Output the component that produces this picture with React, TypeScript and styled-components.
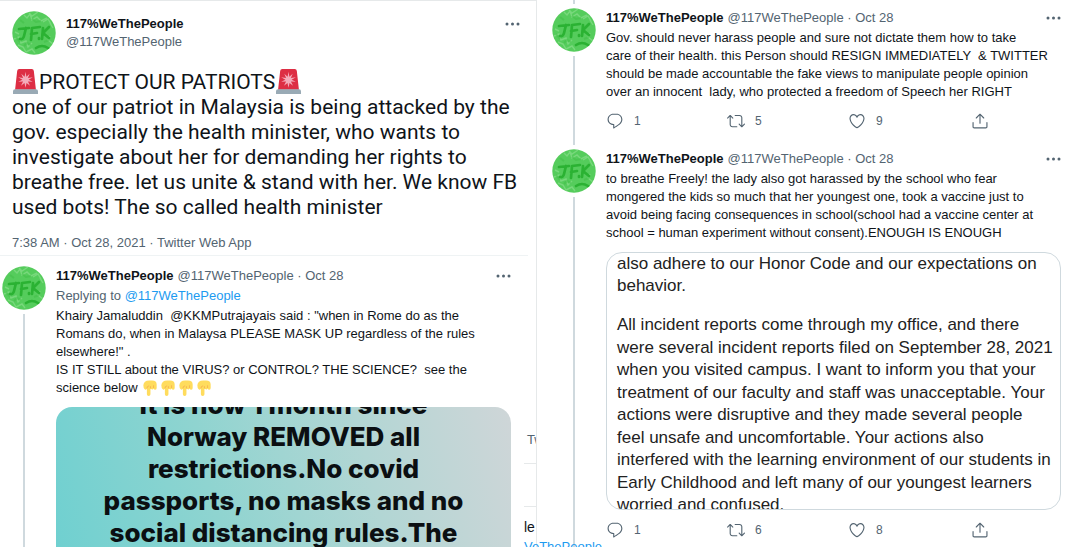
import React from "react";
import styled, { createGlobalStyle } from "styled-components";

const Global = createGlobalStyle`
  * { box-sizing: border-box; }
  body { margin: 0; background: #fff; color: #0f1419; font-family: "Liberation Sans", Arial, sans-serif; }
  p, h1, h2 { margin: 0; }
`;

const Page = styled.main`
  display: grid;
  grid-template-columns: 1fr 1fr;
  height: 100vh;
  overflow: hidden;
`;

const LeftColumn = styled.section`
  display: flex;
  flex-direction: column;
  min-width: 0;
  border-top: 1px solid #e6e9ea;
  border-right: 1px solid #e6e9ea;
`;

const RightColumn = styled.section`
  display: flex;
  flex-direction: column;
  min-width: 0;
  padding: 0 13px 0 15px;
`;

const Lead = styled.article`
  margin-right: 8px;
  padding: 10px 0 0 12px;
  border-bottom: 1px solid #eff3f4;
`;

const LeadHeader = styled.header`
  display: flex;
  gap: 10px;
  padding-right: 8px;
`;

const Names = styled.div`
  flex: 1;
  display: flex;
  flex-direction: column;
  padding-top: 4px;
  line-height: 18px;
`;

const Name = styled.span`
  font-size: 13px;
  font-weight: 700;
  color: #0f1419;
`;

const Muted = styled.span`
  font-size: 13px;
  color: #536471;
`;

const LeadText = styled.p`
  margin-top: 14px;
  font-family: Roboto, "Liberation Sans", sans-serif;
  font-size: 21px;
  line-height: 25px;
  white-space: pre;
`;

const Timestamp = styled.p`
  padding: 14px 0 3px;
  font-size: 13px;
  line-height: 18px;
  color: #536471;
`;

const AvatarSvg = styled.svg`
  display: block;
  flex: none;
  width: 44px;
  height: 44px;
`;

const Lower = styled.div`
  flex: 1;
  display: flex;
  min-height: 0;
`;

const Tweet = styled.article<{ $grow?: boolean }>`
  display: flex;
  gap: 10px;
  min-width: 0;
  ${(p) => p.$grow && "flex: 1;"}
`;

const Rail = styled.div<{ $top: number }>`
  display: flex;
  flex-direction: column;
  align-items: center;
  gap: 4px;
  &::before {
    content: "";
    width: 2px;
    height: ${(p) => p.$top}px;
    background: #cfd9de;
  }
  &::after {
    content: "";
    flex: 1;
    width: 2px;
    background: #cfd9de;
  }
`;

const Body = styled.div<{ $top: number }>`
  flex: 1;
  display: flex;
  flex-direction: column;
  min-width: 0;
  padding-top: ${(p) => p.$top}px;
`;

const TweetHeader = styled.header`
  display: flex;
  align-items: center;
  gap: 4px;
  height: 18px;
  line-height: 18px;
  white-space: nowrap;
`;

const TweetText = styled.p`
  margin-top: 2px;
  font-size: 13px;
  line-height: 18px;
  white-space: pre;
`;

const TextLink = styled.a`
  color: #1d9bf0;
  text-decoration: none;
`;

const MoreButton = styled.button`
  display: flex;
  margin: 0 0 0 auto;
  padding: 0;
  border: 0;
  background: none;
  color: #536471;
  height: 18px;
  align-items: center;
`;

const LeadMore = styled.div`
  padding-top: 4px;
`;

const Poster = styled.figure`
  flex: 1;
  margin: 10px 0 0;
  overflow: hidden;
  border-radius: 16px 16px 0 0;
  background: linear-gradient(75deg, #6fd0d0 0%, #8fd4d0 35%, #b2d6d4 68%, #cfd6d8 100%);
  text-align: center;
  font: 800 26px/32px Inter, sans-serif;
  color: #0b0f12;
`;

const PosterText = styled.p`
  margin-top: -18px;
  white-space: pre;
`;

const Letter = styled.figure`
  display: flex;
  flex-direction: column;
  height: 258px;
  margin: 10px 0 0;
  padding: 0 10px;
  overflow: hidden;
  border: 1px solid #cfd9de;
  border-radius: 16px;
  font: 17px/22px "Liberation Sans", Arial, sans-serif;
  color: #222;
`;

const Paragraph = styled.div<{ $height: number }>`
  flex: none;
  display: flex;
  flex-direction: column;
  justify-content: space-between;
  height: ${(p) => p.$height}px;
  margin-bottom: 17px;
  white-space: pre;
`;

const Actions = styled.footer`
  display: grid;
  grid-template-columns: 121px 121px 123px 1fr;
  margin-top: 10px;
  padding-bottom: 10px;
`;

const Action = styled.button`
  display: flex;
  align-items: center;
  gap: 10px;
  padding: 0;
  border: 0;
  background: none;
  height: 20px;
  font: 12px/20px "Liberation Sans", Arial, sans-serif;
  color: #536471;
`;

const Strip = styled.aside`
  position: relative;
  z-index: 1;
  flex: none;
  width: 12px;
  margin-left: 13px;
  padding-top: 175px;
  font-size: 13px;
  line-height: 18px;
  white-space: nowrap;
`;

const Clip = styled.div<{ $h: number; $line?: boolean }>`
  height: ${(p) => p.$h}px;
  overflow: hidden;
  padding-left: 3px;
  color: #536471;
  ${(p) => p.$line && "border-bottom: 1px solid #e6e9ea;"}
`;

const ClipName = styled.div`
  overflow: hidden;
  height: 31px;
  padding-top: 10px;
  color: #0f1419;
  font-size: 14px;
  line-height: 20px;
`;

function Avatar() {
  return (
    <AvatarSvg viewBox="0 0 44 44" role="img" aria-label="117%WeThePeople">
      <defs>
        <clipPath id="disc"><circle cx="22" cy="22" r="21.7" /></clipPath>
      </defs>
      <g clipPath="url(#disc)">
        <rect width="44" height="44" fill="#56cc5c" />
        <g fill="none" stroke="#8fe091" strokeWidth="1.4" opacity=".6">
          <path d="M12 4l3 3 3-4 2 6 5-3 4 4 6-3M31 11l5-3 3 5M17 2l3 3 6-4M38 12l3 5" />
          <path d="M2 28l5-2 2 6 5-2 2 6 4-4M6 34l5 2 3 5 6-3 3 4M38 25l-2 4 5 4M3 21l4 2" />
        </g>
        <g fill="none" stroke="#40bd46" strokeWidth="2" opacity=".5">
          <path d="M20 8l4 3 5-1M12 35l3-3 4 2M32 31l5-2M4 26l4 5M8 9l4 3" />
        </g>
        <g fill="none" stroke="#2bb233" strokeWidth="2.7" strokeLinecap="round" strokeLinejoin="round">
          <path d="M7 18l10-1M14 17l-2 8q-1 4-4 3M20 17l8-1M20 17l-1 12M19 23l6-1M31 17l-1 11M37 16l-6 6 6 5M27 27v1" />
          <path d="M24 37q6-4 12 0l2 2" />
        </g>
      </g>
    </AvatarSvg>
  );
}

function More() {
  return (
    <MoreButton aria-label="More">
      <svg width="15" height="4" viewBox="0 0 15 4" fill="currentColor">
        <circle cx="2" cy="2" r="1.5" /><circle cx="7.5" cy="2" r="1.5" /><circle cx="13" cy="2" r="1.5" />
      </svg>
    </MoreButton>
  );
}

const EmojiSvg = styled.svg<{ $size: number }>`
  width: ${(p) => p.$size}px;
  height: ${(p) => p.$size}px;
`;
const SirenSvg = styled(EmojiSvg)`
  margin: 0 1px;
  vertical-align: -5px;
`;
const HandSvg = styled(EmojiSvg)`
  margin: 0 1px;
  vertical-align: -4px;
`;

function Siren() {
  return (
    <SirenSvg $size={25} viewBox="0 0 36 36" aria-label="siren">
      <path d="M3 30L6 3q.3-3 3-3h18q2.700 0 3 3l3 27z" fill="#dd2e44" />
      <path d="M18 4l1.300 7 4.700-4-2.500 6 7-1-6 3.500 6 3-7-.500 3 6-5-4-1.500 7-1.500-7-5 4 3-6-7 .500 6-3-6-3.500 7 1-2.500-6 4.700 4z" fill="#f4abba" />
      <path d="M0 32q0-3 3-3h30q3 0 3 3v4H0z" fill="#99aab5" />
    </SirenSvg>
  );
}

function Hand() {
  return (
    <HandSvg $size={16} viewBox="0 0 36 36" aria-label="pointing down">
      <path d="M3 12Q4 1 16 1h7q10 0 10 9v8q0 4-3 4t-4-3q-1 3-4 2t-3-2v13q0 4-4 4t-4-4V19q-2 4-5 2-3-3-3-9z" fill="#ffdc5d" />
      <path d="M11 19q0-5 5-6M26 18v-6M19 19v-5" fill="none" stroke="#ef9645" strokeWidth="1.200" />
    </HandSvg>
  );
}

const icons = {
  reply: "M14.046 2.242l-4.148-.01h-.002c-4.374 0-7.8 3.427-7.8 7.802 0 4.098 3.186 7.206 7.465 7.37v3.828c0 .108.044.286.12.403.142.225.384.347.632.347.138 0 .277-.038.402-.118.264-.168 6.473-4.14 8.088-5.506 1.902-1.61 3.04-3.97 3.043-6.312v-.017c-.006-4.367-3.43-7.787-7.8-7.788zm3.787 12.972c-1.134.96-4.862 3.405-6.772 4.643V16.67c0-.414-.335-.75-.75-.75h-.396c-3.66 0-6.318-2.476-6.318-5.886 0-3.534 2.768-6.302 6.3-6.302l4.147.01h.002c3.532 0 6.3 2.766 6.302 6.296-.003 1.91-.942 3.844-2.514 5.176z",
  retweet: "M23.77 15.67c-.292-.293-.767-.293-1.06 0l-2.22 2.22V7.65c0-2.068-1.683-3.75-3.75-3.75h-5.85c-.414 0-.75.336-.75.75s.336.75.75.75h5.85c1.24 0 2.25 1.01 2.25 2.25v10.24l-2.22-2.22c-.293-.293-.768-.293-1.06 0s-.294.768 0 1.06l3.5 3.5c.145.147.337.22.53.22s.383-.072.53-.22l3.5-3.5c.294-.292.294-.767 0-1.06zm-10.66 3.28H7.26c-1.24 0-2.25-1.01-2.25-2.25V6.46l2.22 2.22c.148.147.34.22.532.22s.384-.073.53-.22c.293-.293.293-.768 0-1.06l-3.5-3.5c-.293-.294-.768-.294-1.06 0l-3.5 3.5c-.294.292-.294.767 0 1.06s.767.293 1.06 0l2.22-2.22V16.7c0 2.068 1.683 3.75 3.75 3.75h5.85c.414 0 .75-.336.75-.75s-.337-.75-.75-.75z",
  like: "M12 21.638h-.014C9.403 21.59 1.95 14.856 1.95 8.478c0-3.064 2.525-5.754 5.403-5.754 2.29 0 3.83 1.58 4.646 2.73.814-1.148 2.354-2.73 4.645-2.73 2.88 0 5.404 2.69 5.404 5.755 0 6.376-7.454 13.11-10.037 13.157H12zM7.354 4.225c-2.08 0-3.903 1.988-3.903 4.255 0 5.74 7.034 11.596 8.55 11.658 1.518-.062 8.55-5.917 8.55-11.658 0-2.267-1.823-4.255-3.903-4.255-2.528 0-3.94 2.936-3.952 2.965-.23.562-1.156.562-1.387 0-.014-.03-1.425-2.965-3.954-2.965z",
  share: "M17.53 7.47l-5-5c-.293-.293-.768-.293-1.06 0l-5 5c-.294.293-.294.768 0 1.06s.767.294 1.06 0l3.72-3.72V15c0 .414.336.75.75.75s.75-.336.75-.75V4.81l3.72 3.72c.146.147.338.22.53.22s.384-.072.53-.22c.293-.293.293-.767 0-1.06zM19.708 21.944H4.292C3.028 21.944 2 20.916 2 19.652V14c0-.414.336-.75.75-.75s.75.336.75.75v5.652c0 .437.355.792.792.792h15.416c.437 0 .792-.355.792-.792V14c0-.414.336-.75.75-.75s.75.336.75.75v5.652c0 1.264-1.028 2.292-2.292 2.292z",
};

function ActionButton({ icon, label, count }: { icon: keyof typeof icons; label: string; count?: number }) {
  return (
    <Action aria-label={label}>
      <svg width="18" height="18" viewBox="0 0 24 24" fill="currentColor"><path d={icons[icon]} /></svg>
      {count}
    </Action>
  );
}

function ActionBar({ replies, retweets, likes }: { replies: number; retweets: number; likes: number }) {
  return (
    <Actions>
      <ActionButton icon="reply" label="Reply" count={replies} />
      <ActionButton icon="retweet" label="Retweet" count={retweets} />
      <ActionButton icon="like" label="Like" count={likes} />
      <ActionButton icon="share" label="Share" />
    </Actions>
  );
}

function Header() {
  return (
    <TweetHeader>
      <Name>117%WeThePeople</Name>
      <Muted>@117WeThePeople · Oct 28</Muted>
      <More />
    </TweetHeader>
  );
}

const letterTop = ["also adhere to our Honor Code and our expectations on", "behavior."];
const letterMain = [
  "All incident reports come through my office, and there",
  "were several incident reports filed on September 28, 2021",
  "when you visited campus. I want to inform you that your",
  "treatment of our faculty and staff was unacceptable. Your",
  "actions were disruptive and they made several people",
  "feel unsafe and uncomfortable. Your actions also",
  "interfered with the learning environment of our students in",
  "Early Childhood and left many of our youngest learners",
  "worried and confused.",
];

const LeftTweet = styled(Tweet)`
  flex: 1;
  padding: 6px 0 0 2px;
`;

const BottomEdge = styled.div`
  flex: none;
  height: 4px;
  margin: 0 -13px 0 auto;
  width: 31%;
  background: #f7f9f9;
`;

export default function App() {
  return (
    <>
      <Global />
      <Page>
        <LeftColumn>
          <Lead>
            <LeadHeader>
              <Avatar />
              <Names>
                <Name>117%WeThePeople</Name>
                <Muted>@117WeThePeople</Muted>
              </Names>
              <LeadMore><More /></LeadMore>
            </LeadHeader>
            <LeadText>
              <Siren />PROTECT OUR PATRIOTS<Siren />
              {"\none of our patriot in Malaysia is being attacked by the\ngov. especially the health minister, who wants to\ninvestigate about her for demanding her rights to\nbreathe free. let us unite & stand with her. We know FB\nused bots! The so called health minister"}
            </LeadText>
            <Timestamp>7:38 AM · Oct 28, 2021 · Twitter Web App</Timestamp>
          </Lead>
          <Lower>
            <LeftTweet>
              <Rail $top={0}><Avatar /></Rail>
              <Body $top={5}>
                <Header />
                <TweetText>
                  <Muted>Replying to </Muted><TextLink href="#profile">@117WeThePeople</TextLink>
                </TweetText>
                <TweetText>
                  {"Khairy Jamaluddin  @KKMPutrajayais said : \"when in Rome do as the\nRomans do, when in Malaysa PLEASE MASK UP regardless of the rules\nelsewhere!\" .\nIS IT STILL about the VIRUS? or CONTROL? THE SCIENCE?  see the\nscience below "}
                  <Hand /><Hand /><Hand /><Hand />
                </TweetText>
                <Poster>
                  <PosterText>{"It is now 1 month since\nNorway REMOVED all\nrestrictions.No covid\npassports, no masks and no\nsocial distancing rules.The"}</PosterText>
                </Poster>
              </Body>
            </LeftTweet>
            <Strip>
              <Clip $h={33} $line>Tw</Clip>
              <Clip $h={43} $line />
              <ClipName>le</ClipName>
              <TextLink href="#profile">VeThePeople</TextLink>
            </Strip>
          </Lower>
        </LeftColumn>
        <RightColumn>
          <Tweet>
            <Rail $top={4}><Avatar /></Rail>
            <Body $top={9}>
              <Header />
              <TweetText>{"Gov. should never harass people and sure not dictate them how to take\ncare of their health. this Person should RESIGN IMMEDIATELY  & TWITTER\nshould be made accountable the fake views to manipulate people opinion\nover an innocent  lady, who protected a freedom of Speech her RIGHT"}</TweetText>
              <ActionBar replies={1} retweets={5} likes={9} />
            </Body>
          </Tweet>
          <Tweet $grow>
            <Rail $top={4}><Avatar /></Rail>
            <Body $top={9}>
              <Header />
              <TweetText>{"to breathe Freely! the lady also got harassed by the school who fear\nmongered the kids so much that her youngest one, took a vaccine just to\navoid being facing consequences in school(school had a vaccine center at\nschool = human experiment without consent).ENOUGH IS ENOUGH"}</TweetText>
              <Letter>
                <Paragraph $height={44}>{letterTop.map((t) => <span key={t}>{t}</span>)}</Paragraph>
                <Paragraph $height={202}>{letterMain.map((t) => <span key={t}>{t}</span>)}</Paragraph>
              </Letter>
              <ActionBar replies={1} retweets={6} likes={8} />
            </Body>
          </Tweet>
          <BottomEdge />
        </RightColumn>
      </Page>
    </>
  );
}
